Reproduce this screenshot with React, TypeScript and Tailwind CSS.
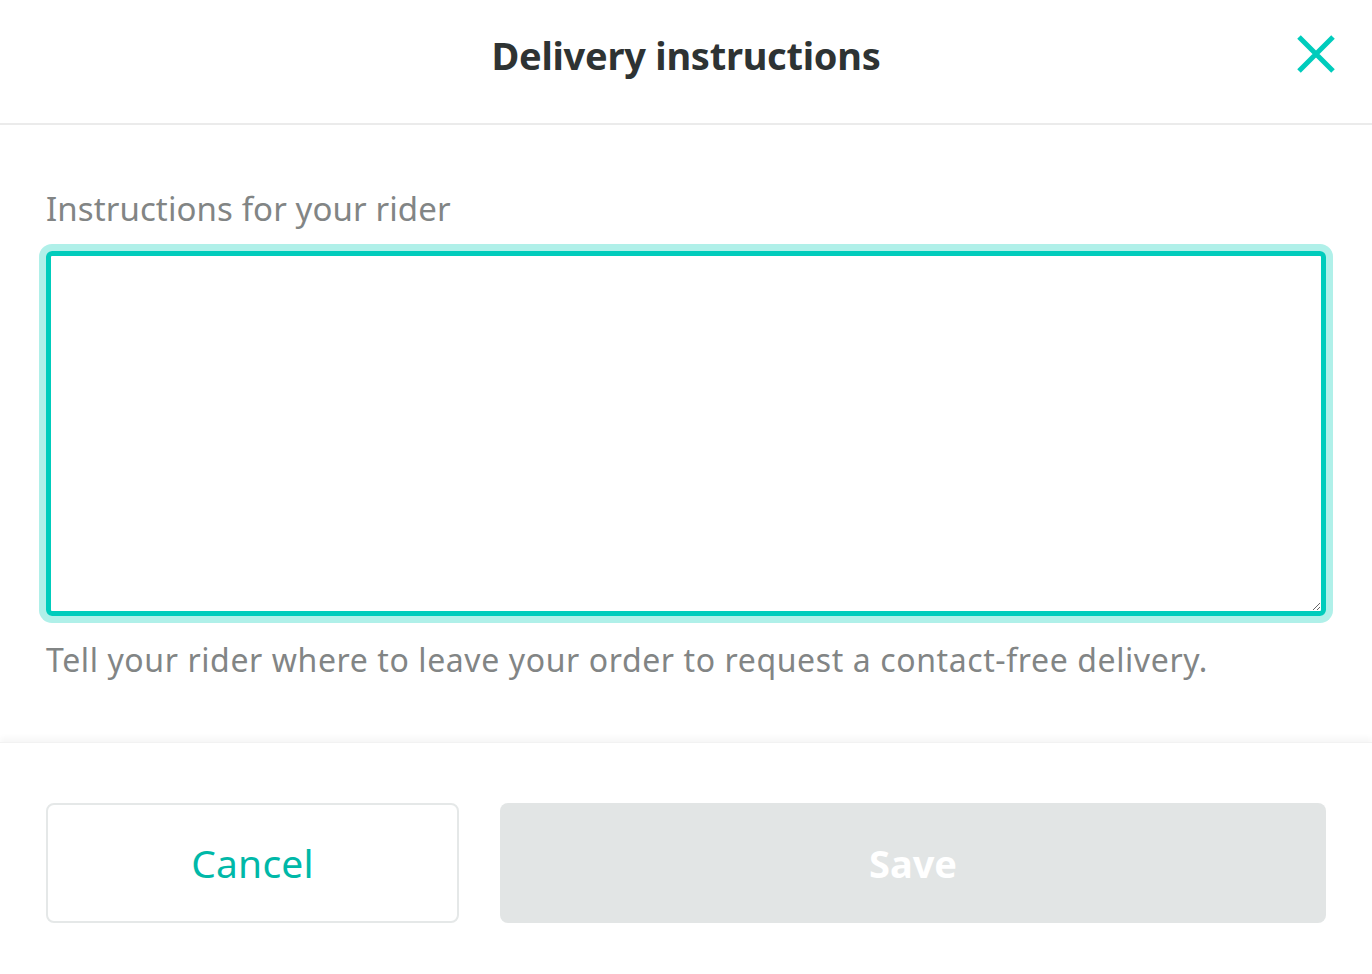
import { useState } from 'react';

const font = { fontFamily: '"Noto Sans", "Open Sans", sans-serif' };

export default function App() {
  const [text, setText] = useState('');

  return (
    <div className="w-[1372px] h-[974px] bg-white flex flex-col" style={font}>
      {/* Header */}
      <div className="relative h-[125px] flex items-center justify-center border-b-2 border-[#ebebeb]">
        <h1 className="text-[38px] font-bold text-[#2e3333] tracking-[-0.25px] leading-none -mt-[14px]">
          Delivery instructions
        </h1>
        <button className="absolute right-[36px] top-[34px] w-[40px] h-[40px] flex items-center justify-center">
          <svg width="40" height="40" viewBox="0 0 40 40" fill="none">
            <path d="M3 3 L37 37 M37 3 L3 37" stroke="#00ccbc" strokeWidth="5" />
          </svg>
        </button>
      </div>

      {/* Body */}
      <div className="flex-1 px-[46px] pt-[62px]">
        <label className="block text-[33px] text-[#828585] leading-[44px] tracking-[0.1px]">
          Instructions for your rider
        </label>
        <textarea
          value={text}
          onChange={(e) => setText(e.target.value)}
          className="mt-[20px] block w-full h-[365px] rounded-[6px] border-[5px] border-[#00ccbc] ring-[7px] ring-[#b0f0e9] outline-none p-4 text-[32px] text-[#2e3333] resize-y"
        />
        <p className="mt-[22px] text-[32px] text-[#828585] leading-[44px] tracking-[0.6px]">
          Tell your rider where to leave your order to request a contact-free delivery.
        </p>
      </div>

      {/* Footer */}
      <div className="h-[232px] shadow-[0_-4px_6px_rgba(0,0,0,0.04)] border-t border-[#f2f2f2] px-[46px] pt-[60px]">
        <div className="flex gap-[41px]">
          <button className="w-[413px] h-[120px] rounded-[8px] border-2 border-[#e5e8e8] bg-white text-[39px] text-[#00b8a8] tracking-[0.2px]">
            Cancel
          </button>
          <button className="flex-1 h-[120px] rounded-[8px] bg-[#e2e5e5] text-[38px] font-bold text-white">
            Save
          </button>
        </div>
      </div>
    </div>
  );
}
